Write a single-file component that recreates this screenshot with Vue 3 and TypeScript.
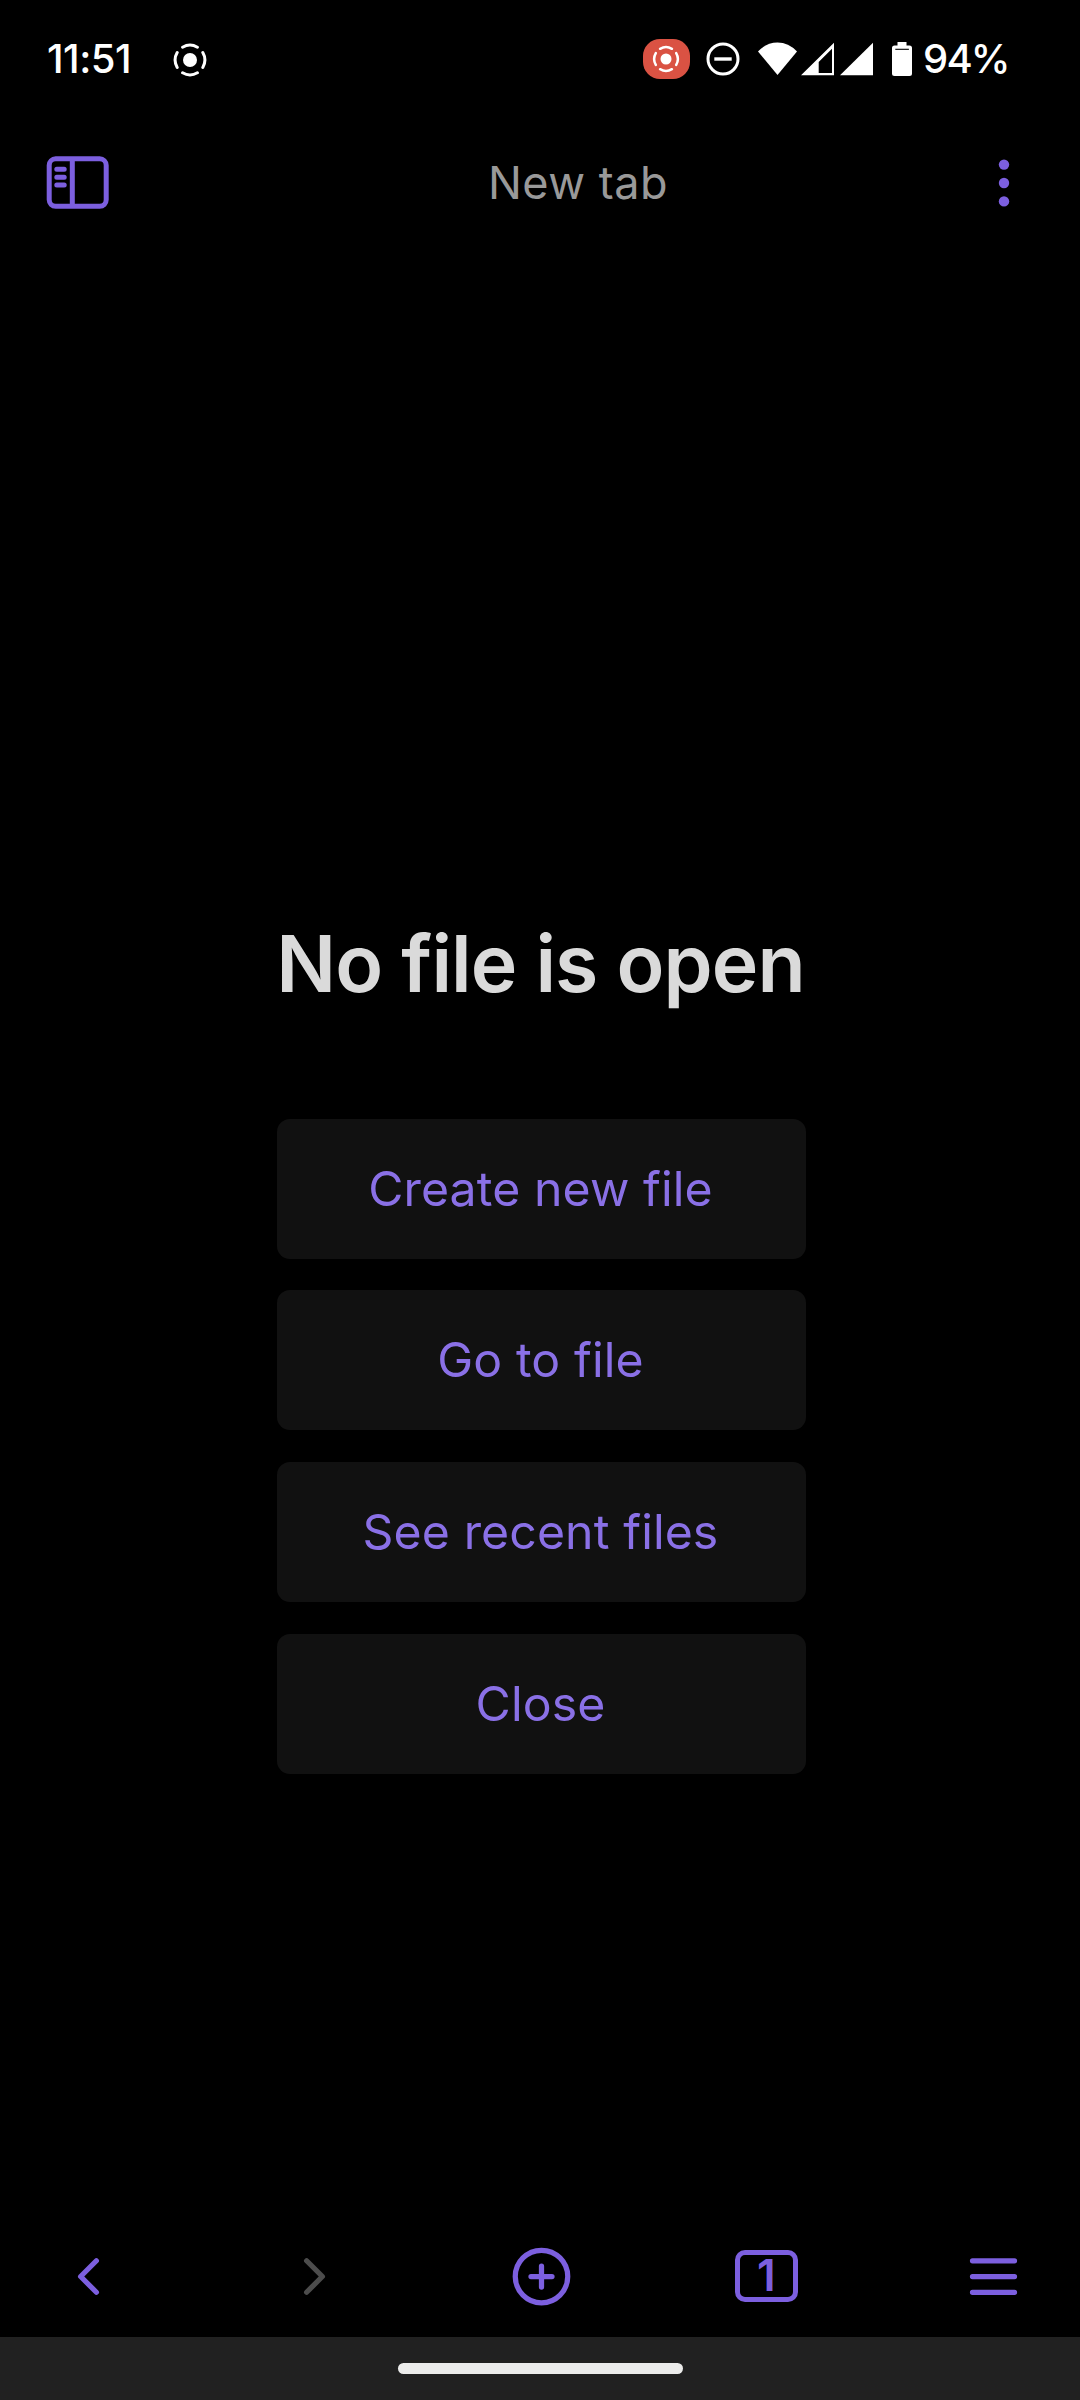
<script setup lang="ts">
interface Action {
  id: string
  label: string
}

const actions: Action[] = [
  { id: 'create', label: 'Create new file' },
  { id: 'goto', label: 'Go to file' },
  { id: 'recent', label: 'See recent files' },
  { id: 'close', label: 'Close' },
]

const tabCount = 1
</script>

<template>
  <div class="screen">
    <header class="status">
      <span class="clock">11:51</span>
      <svg class="cast" width="34" height="34" viewBox="-17 -17 34 34">
        <g fill="none" stroke="#fff" stroke-width="3" stroke-linecap="round">
          <path d="M-7.4-12.8A14.8 14.8 0 0 1 7.4-12.8M12.8-7.4A14.8 14.8 0 0 1 12.8 7.4M7.4 12.8A14.8 14.8 0 0 1-7.4 12.8M-12.8 7.4A14.8 14.8 0 0 1-12.8-7.4" />
        </g>
        <circle r="7" fill="#fff" />
      </svg>
      <div class="system">
        <span class="recording">
          <svg width="28" height="28" viewBox="-14 -14 28 28">
            <path d="M-5.9-10.2A11.8 11.8 0 0 1 5.9-10.2M10.2-5.9A11.8 11.8 0 0 1 10.2 5.9M5.9 10.2A11.8 11.8 0 0 1-5.9 10.2M-10.2 5.9A11.8 11.8 0 0 1-10.2-5.9" fill="none" stroke="#fff" stroke-width="2.5" stroke-linecap="round" />
            <circle r="5.5" fill="#fff" />
          </svg>
        </span>
        <svg class="dnd" width="34" height="34" viewBox="-17 -17 34 34">
          <circle r="15" fill="none" stroke="#fff" stroke-width="3" />
          <path d="M-8.7 0H8.7" stroke="#fff" stroke-width="3.4" />
        </svg>
        <svg class="wifi" width="39" height="34" viewBox="0 0 39 34">
          <path d="M0 9.5Q8.5.5 19.5.5T39 9.5L19.5 33Z" fill="#fff" />
        </svg>
        <svg class="signal" width="33" height="34" viewBox="0 0 33 34">
          <path d="M0 33.3 33 .8V33.3ZM17.7 20V30.9H31V6.8Z" fill="#fff" fill-rule="evenodd" />
        </svg>
        <svg class="signal" width="33" height="34" viewBox="0 0 33 34">
          <path d="M0 33.3 33 .8V33.3Z" fill="#fff" />
        </svg>
        <svg class="battery" width="20" height="34" viewBox="0 0 20 34">
          <path d="M5.5 0h9v3.5H17.5q2.5 0 2.5 2.5V31.5q0 2.5-2.5 2.5H2.5q-2.5 0-2.5-2.5V6q0-2.5 2.5-2.5H5.5Z" fill="#fff" />
          <path d="M3.3 7.3H16.9" stroke="#000" stroke-width="1.1" />
        </svg>
        <span class="percent">94%</span>
      </div>
    </header>

    <nav class="topbar">
      <svg width="64" height="54" viewBox="0 0 64 54" fill="none" stroke="#7c5fdf" stroke-width="5">
        <rect x="3.2" y="2.8" width="57" height="47.5" rx="6.5" />
        <path d="M26.3 3V50" />
        <path d="M10.8 13.3H18.2M10.8 21.3H18.2M10.8 29H18.2" stroke-linecap="round" />
      </svg>
      <span class="tab-title">New tab</span>
      <svg width="12" height="50" viewBox="0 0 12 50" fill="#7c5fdf">
        <circle cx="6" cy="6.6" r="5.2" />
        <circle cx="6" cy="25" r="5.2" />
        <circle cx="6" cy="43.4" r="5.2" />
      </svg>
    </nav>

    <main class="empty">
      <h1>No file is open</h1>
      <div class="actions">
        <button v-for="a in actions" :key="a.id" type="button">{{ a.label }}</button>
      </div>
    </main>

    <footer class="bottombar">
      <svg class="ico" viewBox="0 0 24 24"><path d="M15 18 9 12 15 6" /></svg>
      <svg class="ico dim" viewBox="0 0 24 24"><path d="M9 18 15 12 9 6" /></svg>
      <svg class="ico" viewBox="0 0 24 24"><circle cx="12" cy="12" r="10" /><path d="M8 12h8M12 8v8" /></svg>
      <div class="tabs"><span>{{ tabCount }}</span></div>
      <svg class="ico" viewBox="0 0 24 24"><path d="M4 6H20M4 12H20M4 18H20" /></svg>
    </footer>

    <div class="gesture"><div class="pill"></div></div>
  </div>
</template>

<style>
body {
  margin: 0;
  background: #000;
}
</style>

<style scoped>
.screen {
  width: 1080px;
  height: 2400px;
  background: #000;
  display: flex;
  flex-direction: column;
  overflow: hidden;
  font-family: Inter, "Noto Sans", sans-serif;
}
svg {
  display: block;
  flex: none;
}
.status {
  height: 118px;
  box-sizing: border-box;
  padding: 0 75px 0 47px;
  display: flex;
  align-items: center;
  color: #fff;
  font-size: 40px;
  font-weight: 500;
  line-height: 48px;
}
.clock {
  width: 126px;
  letter-spacing: -0.5px;
  white-space: nowrap;
}
.cast {
  margin-top: 2px;
}
.system {
  margin-left: auto;
  width: 362px;
  flex: none;
  display: flex;
  align-items: center;
}
.recording {
  flex: none;
  width: 47px;
  height: 40px;
  border-radius: 17px;
  background: #da5243;
  display: flex;
  align-items: center;
  justify-content: center;
}
.recording svg {
  margin-right: 1px;
}
.dnd {
  margin-left: 15.7px;
}
.wifi {
  margin-left: 18.8px;
}
.signal {
  margin-left: 3.5px;
}
.signal + .signal {
  margin-left: 6px;
}
.battery {
  margin-left: 19px;
}
.percent {
  margin-left: 11px;
  white-space: nowrap;
  letter-spacing: -1.8px;
}
.topbar {
  height: 129px;
  box-sizing: border-box;
  padding: 0 70px 0 46px;
  display: flex;
  align-items: center;
  justify-content: space-between;
}
.tab-title {
  margin-left: 48px;
  color: #999;
  font-size: 45px;
  line-height: 60px;
  letter-spacing: 0.5px;
  white-space: nowrap;
}
.empty {
  flex: 1;
  display: flex;
  flex-direction: column;
  align-items: center;
  padding-top: 669px;
}
h1 {
  margin: 0 0 106.5px;
  padding-left: 1px;
  font-size: 78.75px;
  line-height: 96px;
  font-weight: 600;
  letter-spacing: -0.9px;
  color: #dadada;
  white-space: nowrap;
}
.actions {
  width: 529px;
  margin-left: 2px;
  display: flex;
  flex-direction: column;
  gap: 31.5px;
}
button {
  height: 140.2px;
  border: 0;
  padding: 0 1px 0 0;
  border-radius: 13px;
  background: #111;
  color: #8a70e6;
  font-family: inherit;
  font-size: 48.2px;
  line-height: 60px;
  letter-spacing: 0.1px;
  white-space: nowrap;
}
.bottombar {
  height: 121px;
  box-sizing: border-box;
  padding: 0 55px 0 57px;
  display: flex;
  align-items: center;
  justify-content: space-between;
}
.ico {
  width: 63px;
  height: 63px;
  fill: none;
  stroke: #7c5fdf;
  stroke-width: 2;
  stroke-linecap: round;
  stroke-linejoin: round;
}
.dim {
  stroke: #4c4c4c;
}
.tabs {
  width: 63px;
  height: 52px;
  margin: 0 1px 1px -1px;
  box-sizing: border-box;
  border: 5px solid #7c5fdf;
  border-radius: 10px;
  display: flex;
  align-items: center;
  justify-content: center;
  color: #7c5fdf;
  font-size: 44px;
  line-height: 40px;
  font-weight: 600;
}
.tabs span {
  margin-bottom: 2px;
}
.gesture {
  height: 63px;
  background: #212121;
  display: flex;
  justify-content: center;
  align-items: center;
}
.pill {
  width: 285px;
  height: 11px;
  border-radius: 6px;
  background: #ececeb;
}
</style>
